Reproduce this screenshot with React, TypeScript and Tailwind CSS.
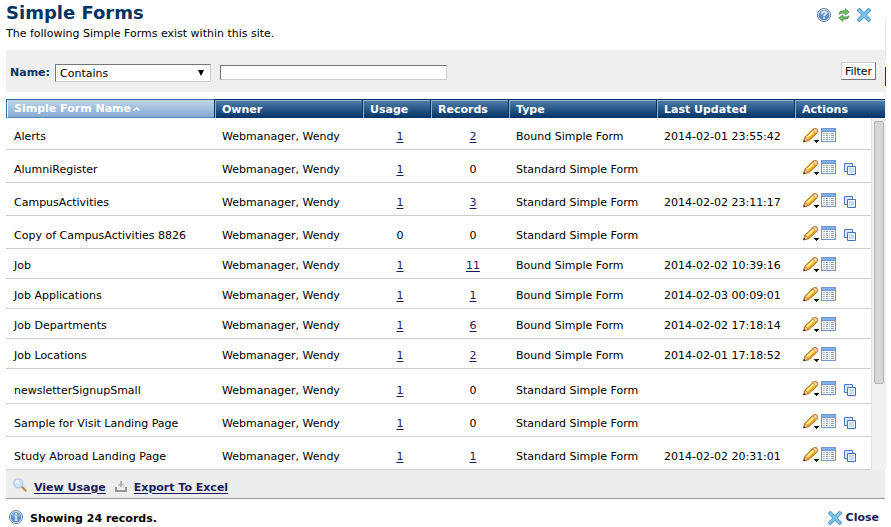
import { useState } from "react";

const forms = [
    { name: 'Alerts', usage: 1, records: 2, bound: true, updated: '2014-02-01 23:55:42', row: 'h-8' },
    { name: 'AlumniRegister', usage: 1, records: 0, bound: false, updated: '', row: 'h-[33px]' },
    { name: 'CampusActivities', usage: 1, records: 3, bound: false, updated: '2014-02-02 23:11:17', row: 'h-[33px]' },
    { name: 'Copy of CampusActivities 8826', usage: 0, records: 0, bound: false, updated: '', row: 'h-[33px]' },
    { name: 'Job', usage: 1, records: 11, bound: true, updated: '2014-02-02 10:39:16', row: 'h-[30px]' },
    { name: 'Job Applications', usage: 1, records: 1, bound: true, updated: '2014-02-03 00:09:01', row: 'h-[30px]' },
    { name: 'Job Departments', usage: 1, records: 6, bound: true, updated: '2014-02-02 17:18:14', row: 'h-[30px]' },
    { name: 'Job Locations', usage: 1, records: 2, bound: true, updated: '2014-02-01 17:18:52', row: 'h-[30px]' },
    { name: 'newsletterSignupSmall', usage: 1, records: 0, bound: false, updated: '', row: 'h-[35px]' },
    { name: 'Sample for Visit Landing Page', usage: 1, records: 0, bound: false, updated: '', row: 'h-[33px]' },
    { name: 'Study Abroad Landing Page', usage: 1, records: 1, bound: false, updated: '2014-02-02 20:31:01', row: 'h-[33px]' },
];

const th = 'h-[19px] border-t border-l border-[#003366] p-0 text-left align-middle';
const thInner = 'block h-[18px] border-t border-l border-[#8fb4d6] bg-linear-to-b from-[#4b7ca8] to-[#003366] pl-[6px] leading-[18px] text-white';
const td = 'border-b border-[#cccccc] pt-0 pb-1 pl-2 align-bottom whitespace-nowrap';
const tdNum = 'border-b border-[#cccccc] pt-0 pr-0 pb-1 pl-2 text-center align-bottom';

function PencilIcon() {
    return (
        <svg width="16" height="15" viewBox="0 0 16 15">
            <path d="M.7 13.500 2 9.400 10.600.9Q12.300 0 14 1.500 15.300 3 14.300 4.600L5.400 12.700Z" fill="#f7cf45" stroke="#b8701c" strokeWidth="1.100" />
            <path d="M3.400 10 10.800 3" stroke="#fff39a" strokeWidth="1.600" />
            <path d="M5 12 13 4.800" stroke="#e09a20" strokeWidth="1.300" />
            <path d="m9.800 1.900 1.600-1.200q1.500-.2 2.500.9 1 1.300.3 2.800l-1.300 1.100Z" fill="#fbd0ae" stroke="#c98748" strokeWidth=".8" />
            <path d="M2 9.700.5 13.800l4.400-1.200q-.5-2.300-2.900-2.900Z" fill="#f5d2aa" stroke="#b87830" strokeWidth=".8" />
            <path d="m1.200 11.800-1 2.400 2.500-.7Z" fill="#40301c" />
            <path d="M11 12h5v1h-1v1h-1v1h-1v-1h-1v-1h-1Z" fill="#111" />
        </svg>
    );
}

function ListIcon() {
    return (
        <svg width="15" height="14" viewBox="0 0 15 14" shapeRendering="crispEdges">
            <path d="M0 0h15v14H0Z" fill="#7095cb" />
            <path d="M1 1h13v2H1Z" fill="#7fb0ec" />
            <path d="M1 4h13v9H1Z" fill="#f4f8ff" />
            <path d="M2 5h2v1H2ZM2 7h2v1H2ZM2 9h2v1H2ZM2 11h2v1H2ZM8 5h1v1H8ZM8 7h1v1H8ZM8 9h1v1H8ZM8 11h1v1H8Z" fill="#a9bcd8" />
            <path d="M5 5h2v1H5ZM5 7h2v1H5ZM5 9h2v1H5ZM5 11h2v1H5ZM10 5h3v1h-3ZM10 7h3v1h-3ZM10 9h3v1h-3ZM10 11h3v1h-3Z" fill="#9b9b9b" />
        </svg>
    );
}

function CopyIcon() {
    return (
        <svg width="12" height="12" viewBox="0 0 12 12">
            <path d="M.5.5h8v8h-8Z" fill="#dcebff" stroke="#4a78c4" />
            <path d="M3.500 3.500h8v8h-8Z" fill="#f4f9ff" stroke="#4472c0" />
            <path d="M5 5h5v5H5Z" fill="#c4dfff" />
        </svg>
    );
}

function RoundIcon({ children }) {
    return (
        <svg width="14" height="14" viewBox="0 0 14 14">
            <circle cx="7" cy="7" r="6.500" fill="#dfe8f4" stroke="#6685b3" />
            <circle cx="7" cy="7" r="5.300" fill="#5f8fc8" />
            <path d="M2.400 6a4.700 4.700 0 0 1 9.200 0q-4.600 1.500-9.200 0Z" fill="#85addb" />
            {children}
        </svg>
    );
}

function RefreshIcon() {
    return (
        <svg width="12" height="14" viewBox="0 0 12 14">
            <path d="M1 6.200Q1.300 3 4.600 2.900H7.200V.8l3.900 3.200-3.900 3V5H4.600Q2 5 1 6.200Z" fill="#79c66c" stroke="#35853a" strokeWidth=".8" />
            <path d="M11 7.800q-.3 3.200-3.600 3.300H4.800v2.100L.9 10l3.900-3v2h2.600Q10 9 11 7.800Z" fill="#79c66c" stroke="#35853a" strokeWidth=".8" />
        </svg>
    );
}

function CrossIcon() {
    return (
        <svg width="14" height="14" viewBox="0 0 14 14">
            <path d="M2.400 2.400 11.600 11.600M11.600 2.400 2.400 11.600" stroke="#4a96c4" strokeWidth="4" strokeLinecap="square" />
            <path d="M2.400 2.400 11.600 11.600M11.600 2.400 2.400 11.600" stroke="#7cc3e6" strokeWidth="2.400" strokeLinecap="square" />
        </svg>
    );
}

function SearchIcon() {
    return (
        <svg width="14" height="14" viewBox="0 0 14 14">
            <path d="m9 9 3.500 3.500" stroke="#c98b3c" strokeWidth="2.400" strokeLinecap="round" />
            <circle cx="5.300" cy="5.300" r="4.500" fill="#cfe6fb" stroke="#b0c8e4" strokeWidth="1.300" />
            <path d="M2.800 5a2.800 2.800 0 0 1 3-2.300" stroke="#fff" strokeWidth="1.200" fill="none" />
        </svg>
    );
}

function ExportIcon() {
    return (
        <svg width="12" height="11" viewBox="0 0 12 11">
            <path d="M5 0h2v3h2.300L6 6.600 2.700 3H5Z" fill="#b4b4b4" />
            <path d="M1 6v4h10V6" fill="none" stroke="#969696" strokeWidth="2" />
        </svg>
    );
}

function Count({ value }) {
    return value > 0 ? <a href="#" className="text-[#1c1c5c] underline underline-offset-2">{value}</a> : <span>{value}</span>;
}

export default function App() {
    const [operator, setOperator] = useState('Contains');
    const [filter, setFilter] = useState('');

    return (
        <div className="flex bg-white pr-[5px] font-[Verdana,'DejaVu_Sans',sans-serif] text-[11px] leading-4 text-black">
            <main className="min-w-0 flex-1 pl-[6px]">
                <header className="flex h-[50px] justify-between">
                    <div>
                        <h1 className="mt-px text-[18px] leading-6 font-bold text-[#003366]">Simple Forms</h1>
                        <p className="mt-px">The following Simple Forms exist within this site.</p>
                    </div>
                    <div className="flex items-start gap-[7px] pt-2 pr-[14px]">
                        <button aria-label="Help">
                            <RoundIcon>
                                <path d="M5 5.500q0-2 2-2t2 1.700q0 1-1 1.600-1 .5-1 1.400" fill="none" stroke="#fff" strokeWidth="1.300" />
                                <path d="M6.300 9.300h1.400v1.400H6.300Z" fill="#fff" />
                            </RoundIcon>
                        </button>
                        <button aria-label="Refresh"><RefreshIcon /></button>
                        <button aria-label="Close window"><CrossIcon /></button>
                    </div>
                </header>

                <form className="flex h-[42px] items-start bg-[#efefef] pr-[9px] pl-1" onSubmit={(e) => e.preventDefault()}>
                    <label htmlFor="operator" className="mt-[15px] w-[45px] font-bold text-[#003366]">Name:</label>
                    <div className="relative mt-[14px]">
                        <select
                            id="operator"
                            value={operator}
                            onChange={(e) => setOperator(e.target.value)}
                            className="block h-[18px] w-[156px] appearance-none border border-t-[#767676] border-r-[#cccccc] border-b-[#cccccc] border-l-[#767676] bg-white pl-1 leading-[18px]"
                        >
                            <option>Contains</option>
                            <option>Starts With</option>
                            <option>Equals</option>
                        </select>
                        <svg className="pointer-events-none absolute top-[6px] right-[7px]" width="6" height="6" viewBox="0 0 6 6">
                            <path d="M0 0h6L3 6Z" fill="#000" />
                        </svg>
                    </div>
                    <input
                        type="text"
                        aria-label="Name filter"
                        value={filter}
                        onChange={(e) => setFilter(e.target.value)}
                        className="mt-[15px] ml-[9px] h-[15px] w-[227px] border border-t-[#767676] border-r-[#cccccc] border-b-[#cccccc] border-l-[#767676] bg-white px-1"
                    />
                    <button type="submit" className="mt-3 ml-auto h-[18px] w-[35px] border border-t-[#cccccc] border-r-[#767676] border-b-[#767676] border-l-[#cccccc] bg-white leading-[18px]">Filter</button>
                </form>

                <table className="mt-[7px] w-full table-fixed border-separate border-spacing-0">
                    <colgroup>
                        <col />
                        <col className="w-[148px]" />
                        <col className="w-[68px]" />
                        <col className="w-[78px]" />
                        <col className="w-[148px]" />
                        <col className="w-[138px]" />
                        <col className="w-[77px]" />
                        <col className="w-[14px]" />
                    </colgroup>
                    <thead>
                        <tr>
                            <th className="h-[19px] border-t border-l border-[#35699a] p-0 text-left">
                                <span className="flex h-[18px] items-center gap-[2px] border-b border-l border-b-[#5585b0] border-l-white bg-linear-to-b from-[#c2d4e6] to-[#82abd2] pt-px pl-[6px] text-white">
                                    Simple Form Name
                                    <svg width="7" height="4" viewBox="0 0 7 4"><path d="M.5 3.500 3.500.8l3 2.700" fill="none" stroke="#fff" strokeWidth="1.300" /></svg>
                                </span>
                            </th>
                            <th className={th}><span className={thInner}>Owner</span></th>
                            <th className={th}><span className={thInner}>Usage</span></th>
                            <th className={th}><span className={thInner}>Records</span></th>
                            <th className={th}><span className={thInner}>Type</span></th>
                            <th className={th}><span className={thInner}>Last Updated</span></th>
                            <th colSpan={2} className={th}><span className={thInner}>Actions</span></th>
                        </tr>
                    </thead>
                    <tbody>
                        {forms.map((form, i) => (
                            <tr key={form.name} className={form.row}>
                                <td className={td}>{form.name}</td>
                                <td className={td}>Webmanager, Wendy</td>
                                <td className={tdNum}><Count value={form.usage} /></td>
                                <td className={tdNum}><Count value={form.records} /></td>
                                <td className={td}>{form.bound ? 'Bound Simple Form' : 'Standard Simple Form'}</td>
                                <td className={td}>{form.updated}</td>
                                <td className={form.bound ? 'border-b border-[#cccccc] pt-0 pr-0 pb-[6px] pl-[9px] align-bottom' : 'border-b border-[#cccccc] pt-0 pr-0 pb-[7px] pl-[9px] align-bottom'}>
                                    <div className="flex items-start">
                                        <button aria-label={'Edit ' + form.name}><PencilIcon /></button>
                                        <button aria-label={'View data for ' + form.name} className="ml-[2px]"><ListIcon /></button>
                                        {!form.bound && <button aria-label={'Copy ' + form.name} className="mt-[3px] ml-2"><CopyIcon /></button>}
                                    </div>
                                </td>
                                {i === 0 && (
                                    <td rowSpan={forms.length} className="border-l border-[#e2e2e2] bg-[#f1f1f1] p-0 pt-[3px] pr-px pl-[2px] align-top">
                                        <div className="h-[263px] rounded-xs border border-[#b4b4b4] bg-[#d6d6d6]" />
                                    </td>
                                )}
                            </tr>
                        ))}
                    </tbody>
                </table>

                <nav className="flex h-[29px] items-center border-b border-[#999999] bg-[#ededed] pt-[7px] pl-[7px] font-bold">
                    <span className="pb-[6px]"><SearchIcon /></span>
                    <a href="#" className="ml-[7px] text-[#1c1c5c] underline underline-offset-2">View Usage</a>
                    <span className="ml-[9px] pb-[3px]"><ExportIcon /></span>
                    <a href="#" className="ml-[7px] text-[#1c1c5c] underline underline-offset-2">Export To Excel</a>
                </nav>

                <footer className="flex items-start justify-between pt-[11px] pr-[6px] pl-[3px] font-bold">
                    <p className="flex items-start gap-[7px]">
                        <RoundIcon>
                            <path d="M6.300 3h1.500v1.500H6.300ZM5.700 5.800h2v4h.8v.9H5.700v-.9h.7V6.600h-.7Z" fill="#fff" />
                        </RoundIcon>
                        <span className="pt-px">Showing 24 records.</span>
                    </p>
                    <button className="flex items-center gap-1 text-[#1c1c5c]"><CrossIcon /> Close</button>
                </footer>
            </main>
            {/* edge of the panel behind this one */}
            <div className="flex w-px flex-col">
                <div className="mt-[18px] h-[42px] bg-[#e9e9e9]" />
                <div className="mt-[7px] h-[19px] bg-[#003366]" />
                <div className="h-[384px] bg-[#efefef]" />
            </div>
        </div>
    );
}
